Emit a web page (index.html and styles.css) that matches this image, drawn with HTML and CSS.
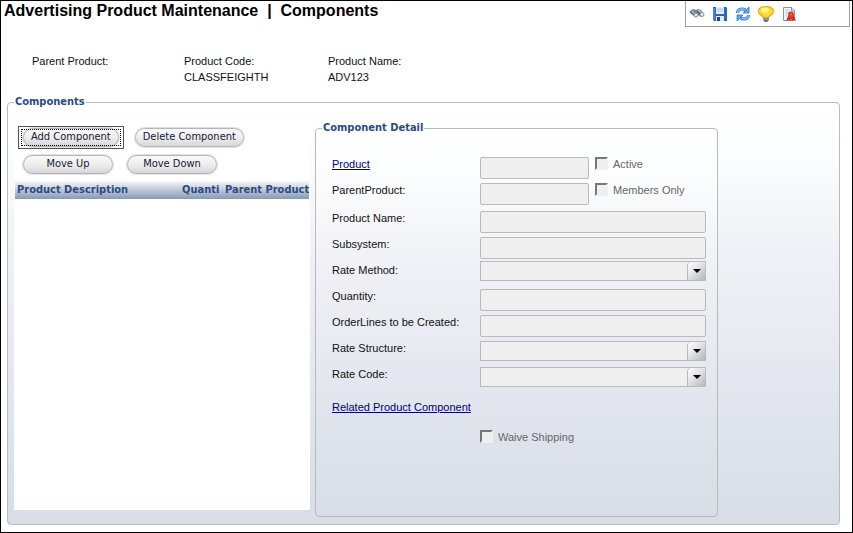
FILE: index.html
```html
<!DOCTYPE html>
<html lang="en">
<head>
<meta charset="utf-8">
<title>Advertising Product Maintenance | Components</title>
<link rel="stylesheet" href="styles.css">
</head>
<body>
<header class="top">
  <h1>Advertising Product Maintenance&nbsp; |&nbsp; Components</h1>
  <div class="toolbar">
    <button type="button" aria-label="Find"><svg viewBox="0 0 16 16"><path d="M1 5 4 3l3 1 2-1 3 1 2 3 1 2-3 2-3-2-2 2-3-2-3-2z" fill="#777e87"/><path d="M3 5l3 3M9 4l4 3" stroke="#c6cbd1" stroke-width="1.200"/><path d="M1 6l4 3M8 5l3 3" stroke="#4c525a"/><circle cx="7" cy="9" r="2" fill="#dff0f6" stroke="#838d98"/><circle cx="13" cy="8.500" r="2" fill="#e2f5fc" stroke="#838d98"/></svg></button>
    <button type="button" aria-label="Save"><svg viewBox="0 0 16 16"><path d="M1 1h13l1 1v13H2l-1-1z" fill="#2a66c4"/><path d="M4 1h8v7H4z" fill="#e4effb"/><path d="M5 3h6M5 5h6" stroke="#a9c3e6"/><path d="M4 10h8v5H4z" fill="#e2eaf4"/><path d="M5 11h3v4H5z" fill="#1d4891"/><path d="M2 2v12" stroke="#6b9fe2"/></svg></button>
    <button type="button" aria-label="Refresh"><svg viewBox="0 0 16 16"><path d="M2.500 7c0-4 5-5 8-3" fill="none" stroke="#2b73c4" stroke-width="3"/><path d="M2.500 7c0-4 5-5 8-3" fill="none" stroke="#86c6f5" stroke-width="1.400"/><path d="M14 1v6H8z" fill="#5dacec" stroke="#2b73c4" stroke-width=".8"/><path d="M13.500 9c0 4-5 5-8 3" fill="none" stroke="#2b73c4" stroke-width="3"/><path d="M13.500 9c0 4-5 5-8 3" fill="none" stroke="#86c6f5" stroke-width="1.400"/><path d="M2 15V9h6z" fill="#5dacec" stroke="#2b73c4" stroke-width=".8"/></svg></button>
    <button type="button" aria-label="Hint"><svg viewBox="0 0 16 16"><path d="M8 0c5 0 8 2 8 5 0 4-3 4-5 7H5C3 9 0 9 0 5c0-3 3-5 8-5z" fill="#e8a81b"/><path d="M8 1c4 0 7 2 7 4 0 3-4 4-5 6H6C5 9 1 8 1 5c0-2 3-4 7-4z" fill="#ffdc2b"/><ellipse cx="7" cy="4" rx="4" ry="2.500" fill="#fff48a"/><path d="M5 12h6v2l-2 2H7l-2-2z" fill="#6c6d73"/><path d="M5 13h6" stroke="#b7b7be"/></svg></button>
    <button type="button" aria-label="Certificate"><svg viewBox="0 0 16 16"><path d="M2.500 1.500h8l3 3v10h-11z" fill="#f8faff" stroke="#8995b0"/><path d="M10.500 1v4h3" fill="#dce3f1" stroke="#8995b0"/><path d="M4 4h5M4 6h4M4 8h2M4 10h2" stroke="#bac5db"/><path d="M7 10 5 15l2-1 2 1 1-2 1 2 2-1 2 1-2-5z" fill="#d6301c"/><circle cx="10" cy="8.500" r="3" fill="#e03a22"/><circle cx="10" cy="8.500" r="1" fill="#ff7a55"/></svg></button>
  </div>
</header>

<dl class="summary">
  <div><dt>Parent Product:</dt><dd></dd></div>
  <div><dt>Product Code:</dt><dd>CLASSFEIGHTH</dd></div>
  <div><dt>Product Name:</dt><dd>ADV123</dd></div>
</dl>

<fieldset class="panel components">
  <legend>Components</legend>
  <div class="columns">
    <section class="list">
      <div class="actions">
        <button type="button" class="pill focused"><span>Add Component</span></button>
        <button type="button" class="pill"><span>Delete Component</span></button>
      </div>
      <div class="actions second">
        <button type="button" class="pill narrow"><span>Move Up</span></button>
        <button type="button" class="pill narrow"><span>Move Down</span></button>
      </div>
      <table>
        <thead><tr><th class="description">Product Description</th><th class="quantity">Quanti</th><th>Parent Product</th></tr></thead>
        <tbody></tbody>
      </table>
    </section>

    <fieldset class="panel detail">
      <legend>Component Detail</legend>
      <div class="group">
        <div class="row">
          <a href="#product" id="product-label">Product</a>
          <div class="pair"><input type="text" aria-labelledby="product-label" disabled><label class="check"><input type="checkbox" disabled>Active</label></div>
        </div>
        <div class="row">
          <label for="parent">ParentProduct:</label>
          <div class="pair"><input type="text" id="parent" disabled><label class="check"><input type="checkbox" disabled>Members Only</label></div>
        </div>
      </div>
      <div class="group">
        <div class="row"><label for="name">Product Name:</label><input type="text" id="name" disabled></div>
        <div class="row"><label for="subsystem">Subsystem:</label><input type="text" id="subsystem" disabled></div>
        <div class="row"><label for="method">Rate Method:</label><div class="drop tight"><select id="method" disabled></select></div></div>
        <div class="row"><label for="quantity">Quantity:</label><input type="text" id="quantity" disabled></div>
        <div class="row"><label for="lines">OrderLines to be Created:</label><input type="text" id="lines" disabled></div>
        <div class="row"><label for="structure">Rate Structure:</label><div class="drop"><select id="structure" disabled></select></div></div>
        <div class="row"><label for="code">Rate Code:</label><div class="drop"><select id="code" disabled></select></div></div>
      </div>
      <a class="related" href="#related">Related Product Component</a>
      <label class="check waive"><input type="checkbox" disabled>Waive Shipping</label>
    </fieldset>
  </div>
</fieldset>
</body>
</html>
```
FILE: styles.css
```css
* { box-sizing: border-box; }

body {
  margin: 0;
  min-height: 100vh;
  padding-bottom: 7px;
  border: 1px solid #000;
  background: #fff;
  color: #111;
  font: 11px/16px "Liberation Sans", Arial, sans-serif;
  display: flex;
  flex-direction: column;
}

.top {
  display: flex;
  justify-content: space-between;
  align-items: flex-start;
  padding: 0 2px 0 3px;
}

h1 {
  margin: 0;
  font-size: 16px;
  line-height: 20px;
  color: #000;
}

.toolbar {
  display: flex;
  gap: 7px;
  width: 165px;
  height: 26px;
  padding: 5px 3px;
  border: 1px solid #a0a0a0;
  border-top: 0;
}

.toolbar button {
  width: 16px;
  height: 16px;
  padding: 0;
  border: 0;
  background: none;
}

.toolbar svg {
  display: block;
  width: 16px;
  height: 16px;
}

.summary {
  display: grid;
  grid-template-columns: 152px 144px 1fr;
  margin: 26px 0 0 31px;
}

.summary dd {
  margin: 0;
  min-height: 16px;
}

.panel {
  min-width: 0;
  margin: 0;
  border: 1px solid #bababa;
  border-radius: 4px;
  background: linear-gradient(#fff 0%, #fcfdfe 12%, #eff0f5 38%, #e0e4ed 75%, #d9dde6 100%);
}

.panel > legend {
  padding: 0 1px;
  color: #2b4b82;
  font: bold 11px/16px "DejaVu Sans Condensed", "DejaVu Sans", sans-serif;
}

.components {
  flex: 1;
  margin: 9px 12px 0 6px;
  padding: 10px 0 7px 6px;
}

.columns {
  display: grid;
  grid-template-columns: 296fr 403fr 116fr;
  column-gap: 5px;
  height: 100%;
}

.list {
  margin-bottom: 7px;
  padding: 6px 1px 0;
  background: #fff;
}

.actions {
  display: flex;
  gap: 8px;
  padding-left: 3px;
  margin-bottom: 4px;
}

.second { padding-left: 5px; }

.pill {
  height: 23px;
  padding: 1px 2px;
  border: 1px solid transparent;
  background: none;
  color: #151a38;
  font: 11px/14px "DejaVu Sans Condensed", "DejaVu Sans", sans-serif;
}

.pill span {
  display: block;
  height: 19px;
  padding: 1px 7px;
  border: 1px solid #b5b5b7;
  border-radius: 10px;
  background: linear-gradient(#fafafa, #eee 50%, #d7d7da);
  box-shadow: 0 0 0 1px #e3e3e6;
}

.pill.focused {
  padding: 1px 4px;
  border-color: #555;
  outline: 1px dotted #000;
  outline-offset: -4px;
}

.narrow {
  width: 96px;
}

.list table {
  width: 100%;
  table-layout: fixed;
  border-collapse: collapse;
  color: #2b4b82;
  font: bold 11px/19px "DejaVu Sans Condensed", "DejaVu Sans", sans-serif;
  background: linear-gradient(#fff, #ccd4de 40%, #8799b5);
}

.list th {
  padding: 0 0 0 2px;
  text-align: left;
  white-space: nowrap;
}

.description { width: 165px; }
.quantity { width: 43px; }

.detail {
  padding: 20px 11px 0 16px;
  min-height: 397px;
}

.detail > legend { margin-left: -10px; }

.group { margin-bottom: 2px; }

.row {
  display: grid;
  grid-template-columns: 148px 1fr;
  align-items: start;
  height: 26px;
}

a { color: #00007b; }

input[type="text"] {
  width: 100%;
  height: 22px;
  margin: 1px 0 0;
  border: 1px solid #bababa;
  border-radius: 2px;
  background: #efefef;
}

.pair {
  display: grid;
  grid-template-columns: 109px 1fr;
  gap: 6px;
}

.check {
  display: flex;
  gap: 5px;
  color: #666;
}

.check input {
  appearance: none;
  width: 13px;
  height: 13px;
  margin: 1px 0 0;
  border: 2px solid;
  border-color: #777 #f0f0f0 #f0f0f0 #777;
  background: #efefef;
}

.drop {
  position: relative;
  margin-top: 1px;
}

.drop.tight { margin-top: -1px; }

.drop select {
  display: block;
  appearance: none;
  width: 100%;
  height: 20px;
  border: 1px solid #bababa;
  border-radius: 0;
  background: #efefef;
  opacity: 1;
}

.drop::before {
  content: "";
  position: absolute;
  z-index: 1;
  top: 1px;
  right: 1px;
  width: 17px;
  height: 18px;
  border-left: 1px solid #bababa;
  border-radius: 4px 4px 0 0;
  background: linear-gradient(135deg, #fff, #e3e3e5 45%, #b5b6b9);
}

.drop::after {
  content: "";
  position: absolute;
  z-index: 2;
  top: 8px;
  right: 5px;
  border: 4px solid transparent;
  border-top-color: #000;
  border-bottom: 0;
}

.related {
  display: block;
  margin-top: 7px;
}

.waive { margin: 14px 0 0 148px; }
```
